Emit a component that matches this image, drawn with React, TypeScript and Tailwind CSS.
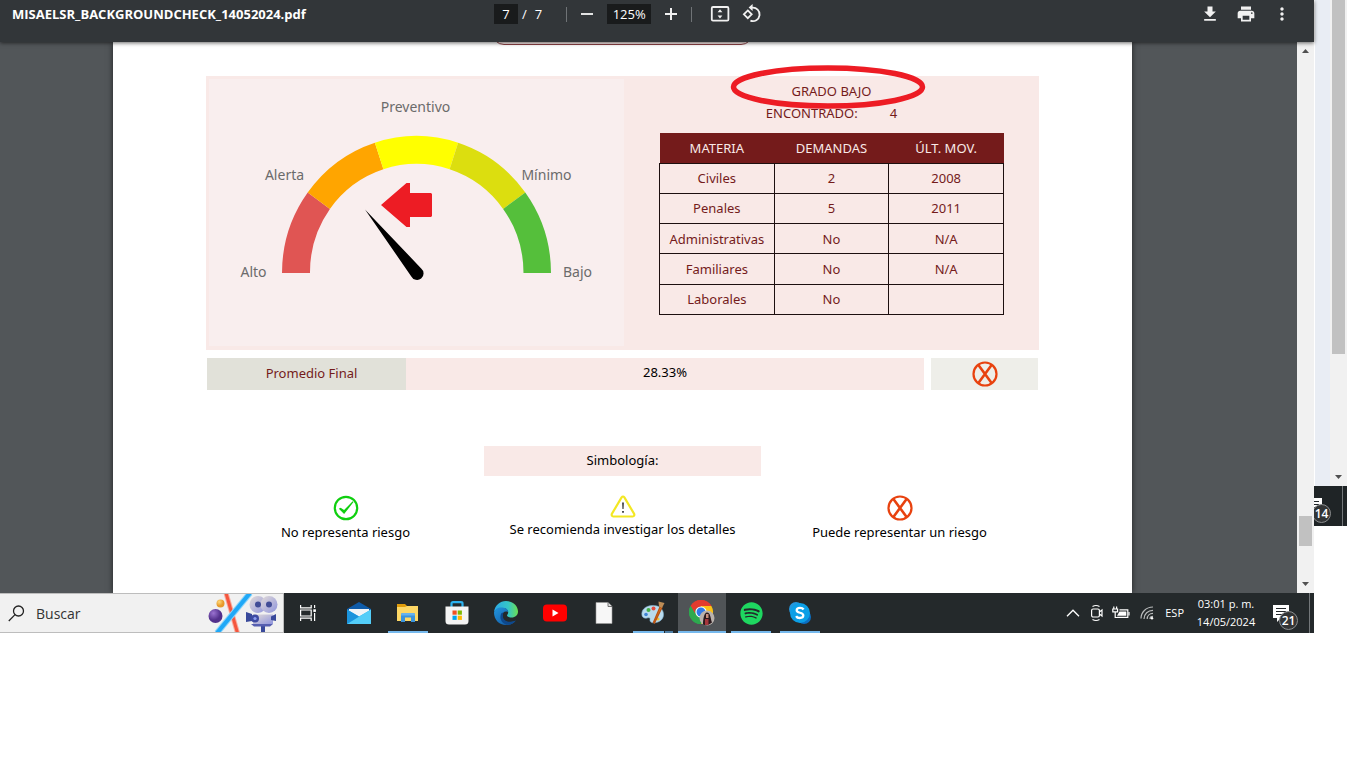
import React from "react";
import { FaSpotify } from "react-icons/fa";
import { MdFileDownload, MdPrint, MdMoreVert } from "react-icons/md";

const rows = [
  ["Civiles", "2", "2008"],
  ["Penales", "5", "2011"],
  ["Administrativas", "No", "N/A"],
  ["Familiares", "No", "N/A"],
  ["Laborales", "No", ""],
];

function Triangle({ up = false }: { up?: boolean }) {
  return (
    <svg viewBox="0 0 7 4" className="h-1 w-[7px]" aria-hidden="true">
      <path d={up ? "M0 4h7L3.500 0z" : "M0 0h7L3.500 4z"} fill="#505050" />
    </svg>
  );
}

function Toolbar() {
  return (
    <header className="relative z-10 flex h-[42px] items-start bg-[#323639] pt-1 font-['Open_Sans',sans-serif] text-white shadow-[0_1px_4px_rgba(0,0,0,0.6)]">
      <div className="flex h-5 w-[494px] shrink-0 items-center pl-3">
        <h1 className="text-[13px] leading-5 font-bold whitespace-nowrap">MISAELSR_BACKGROUNDCHECK_14052024.pdf</h1>
      </div>
      <div className="flex h-5 items-center text-[13px] leading-5">
        <input aria-label="Página" defaultValue="7" className="h-5 w-6 bg-[#191b1c] text-center" />
        <span className="ml-1">/</span>
        <span className="ml-2">7</span>
        <span className="ml-6 h-[15px] w-px bg-[#6f7376]" />
        <button aria-label="Alejar" className="ml-[10px] flex size-5 items-center justify-center">
          <span className="h-0.5 w-3 bg-[#e2e3e3]" />
        </button>
        <input aria-label="Zoom" defaultValue="125%" className="ml-[10px] h-5 w-11 bg-[#191b1c] text-center" />
        <button aria-label="Acercar" className="ml-[10px] flex size-5 items-center justify-center">
          <svg viewBox="0 0 12 12" className="size-3" fill="#f1f1f1"><path d="M5 0h2v5h5v2H7v5H5V7H0V5h5z" /></svg>
        </button>
        <span className="ml-[10px] h-[15px] w-px bg-[#6f7376]" />
        <button aria-label="Ajustar a la página" className="ml-[18px] flex size-5 items-center justify-center">
          <svg viewBox="0 0 20 18" className="h-[18px] w-5">
            <rect x="1.800" y="2" width="16.600" height="13.600" rx="1.200" fill="none" stroke="#f1f1f1" strokeWidth="1.800" />
            <path d="M10 4.200l2.400 3H7.600zM10 13.400l-2.400-3h4.800z" fill="#f1f1f1" />
          </svg>
        </button>
        <button aria-label="Girar" className="ml-3 flex size-5 items-center justify-center">
          <svg viewBox="0 0 20 20" className="size-5" fill="none" stroke="#f1f1f1" strokeWidth="1.800">
            <path d="M5.800 6.400l3.900 3.900-3.900 3.900-3.900-3.900z" />
            <path d="M10 3.600a6.800 6.800 0 1 1-1.600 13.100" />
            <path d="M10.600 0v7L6.600 3.600z" fill="#f1f1f1" stroke="none" />
          </svg>
        </button>
      </div>
      <div className="ml-auto flex h-5 items-center gap-4 pr-[22px] text-[#f1f1f1]">
        <button aria-label="Descargar"><MdFileDownload className="size-5" /></button>
        <button aria-label="Imprimir"><MdPrint className="size-5" /></button>
        <button aria-label="Más acciones"><MdMoreVert className="size-5" /></button>
      </div>
    </header>
  );
}

function Gauge() {
  return (
    <svg viewBox="0 0 414 267" className="block h-[267px] w-full bg-[#f9eeee] font-['Noto_Sans',sans-serif] text-[14px]" role="img" aria-label="Medidor de riesgo">
      <path d="M72.500 194A134.500 137 0 0 1 98.200 113.500L120.400 129.900A107 109 0 0 0 100.500 194Z" fill="#e05553" />
      <path d="M98.200 113.500A134.500 137 0 0 1 165.400 63.700L173.900 90.300A107 109 0 0 0 120.400 129.900Z" fill="#ffa500" />
      <path d="M165.400 63.700A134.500 137 0 0 1 248.600 63.700L240.100 90.300A107 109 0 0 0 173.900 90.300Z" fill="#ffff00" />
      <path d="M248.600 63.700A134.500 137 0 0 1 315.800 113.500L293.600 129.900A107 109 0 0 0 240.100 90.300Z" fill="#dcde0f" />
      <path d="M315.800 113.500A134.500 137 0 0 1 341.500 194H314A107 109 0 0 0 293.600 129.900Z" fill="#55bf3b" />
      <path d="M155.500 130.500L211.700 189.400A6.500 6.500 0 1 1 201.800 197.400Z" fill="#000" />
      <path d="M171.500 126L197 104h3.500v10H221.500l1 1v22l-1 1H200.500v10H197Z" fill="#ed1c24" />
      <g fill="#6b6b6b" textAnchor="middle">
        <text x="206" y="33">Preventivo</text>
        <text x="75" y="101">Alerta</text>
        <text x="337" y="101">Mínimo</text>
        <text x="44" y="198">Alto</text>
        <text x="368" y="198">Bajo</text>
      </g>
    </svg>
  );
}

function RiskIcon() {
  return (
    <svg viewBox="0 0 26 26" className="size-[26px]" fill="none" stroke="#e8420f" aria-hidden="true">
      <circle cx="13" cy="13" r="11.500" strokeWidth="2.200" />
      <path d="M6.400 4L19.600 22M19.600 4L6.400 22" strokeWidth="2.600" />
    </svg>
  );
}

function OkIcon() {
  return (
    <svg viewBox="0 0 26 26" className="size-[26px]" fill="none" aria-hidden="true">
      <circle cx="13" cy="13" r="11.200" stroke="#0fcf0f" strokeWidth="2.200" />
      <path d="M5.800 13.800l1.800-1 3.500 2.200 8.600-8.700.8.800-9.400 12z" fill="#0fcf0f" />
    </svg>
  );
}

function WarnIcon() {
  return (
    <svg viewBox="0 0 26 23" className="h-[23px] w-[26px]" aria-hidden="true">
      <path d="M11.600 2.400Q13 .600 14.400 2.400L24.200 19Q24.800 21.200 22.600 21.500H3.400Q1.200 21.200 1.800 19Z" fill="#fff" stroke="#f3e723" strokeWidth="2.200" />
      <path d="M12.200 7.500h1.600l-.3 6.500h-1zM12.200 16h1.600v1.700h-1.600z" fill="#222" />
    </svg>
  );
}

function Report() {
  return (
    <article className="ml-[113px] flex-1 bg-white px-[93px] pb-[51px] font-['Noto_Sans',sans-serif] text-[13px] leading-5 text-black shadow-[0_0_6px_rgba(0,0,0,0.6)]">
      <div className="flex h-[3px] items-end justify-center overflow-hidden">
        <div className="h-8 w-[261px] shrink-0 rounded-xl border border-[#8a3f42] bg-[#f9e9e7]" />
      </div>
      <section className="mt-[31px] flex bg-[#f9e9e7]">
        <div className="flex-1 pt-[3px] pb-1 pl-[3px]"><Gauge /></div>
        <div className="flex flex-1 flex-col items-center pt-[5px] text-[#741b1b]">
          <div className="relative">
            <h2>GRADO BAJO</h2>
            <svg viewBox="0 0 196 46" className="absolute -top-4 left-1/2 h-[46px] w-[196px] -translate-x-[102px]" fill="none" aria-hidden="true">
              <ellipse cx="98" cy="22" rx="94.500" ry="19" stroke="#ed1c24" strokeWidth="5.500" />
            </svg>
          </div>
          <p className="mt-0.5 flex gap-8"><span>ENCONTRADO:</span><span>4</span></p>
          <table className="mt-[10px] h-[182px] w-[345px] table-fixed border-collapse text-center">
            <thead>
              <tr className="h-[30px] bg-[#741b1b] text-[#f9e9e7]">
                {["MATERIA", "DEMANDAS", "ÚLT. MOV."].map((h) => (
                  <th key={h} scope="col" className="p-0 font-normal">{h}</th>
                ))}
              </tr>
            </thead>
            <tbody>
              {rows.map((r) => (
                <tr key={r[0]} className="h-[30px]">
                  {r.map((c, i) => (
                    <td key={i} className="border border-[#1d0f0f] p-0">{c}</td>
                  ))}
                </tr>
              ))}
            </tbody>
          </table>
        </div>
      </section>
      <section className="mx-px mt-2 flex h-8">
        <div className="flex w-[199px] items-center justify-center bg-[#e1e1d9] pb-0.5 pl-[10px] text-[#741b1b]">Promedio Final</div>
        <div className="flex flex-1 items-center justify-center bg-[#f9e9e7] pb-1">28.33%</div>
        <div className="ml-[7px] flex w-[107px] items-center justify-center bg-[#eeeee9]"><RiskIcon /></div>
      </section>
      <section className="mx-px mt-14">
        <h2 className="mx-auto w-1/3 bg-[#f9e9e7] pt-1 pb-1.5 text-center">Simbología:</h2>
        <ul className="mt-[19px] grid grid-cols-3">
          <li className="flex flex-col items-center gap-[1px]"><OkIcon />No representa riesgo</li>
          <li className="flex flex-col items-center gap-[1px]"><WarnIcon />Se recomienda investigar los detalles</li>
          <li className="flex flex-col items-center gap-[1px]"><RiskIcon />Puede representar un riesgo</li>
        </ul>
      </section>
    </article>
  );
}

function SearchArt() {
  return (
    <svg viewBox="0 0 76 40" className="h-10 w-[76px] shrink-0" aria-hidden="true">
      <defs>
        <radialGradient id="ball" cx=".35" cy=".3"><stop stopColor="#9a72d0" /><stop offset="1" stopColor="#53308c" /></radialGradient>
        <radialGradient id="sun" cx=".35" cy=".3"><stop stopColor="#ffd97a" /><stop offset="1" stopColor="#e79a2b" /></radialGradient>
        <linearGradient id="cam" x1="0" y1="0" x2="1" y2="1"><stop stopColor="#e3dcd8" /><stop offset="1" stopColor="#8f94dc" /></linearGradient>
      </defs>
      <circle cx="8.500" cy="23" r="7" fill="url(#ball)" />
      <circle cx="13.500" cy="10.500" r="4" fill="url(#sun)" />
      <path d="M19 0L30.500 40" stroke="#f9a99b" strokeWidth="5" />
      <path d="M19 0L30.500 40" stroke="#f4563d" strokeWidth="3" />
      <path d="M43 0L10 40" stroke="#8bd5fb" strokeWidth="6" />
      <path d="M43 0L10 40" stroke="#1fa8f7" strokeWidth="4" />
      <path d="M54 30h4v10h-4z" fill="#39499b" />
      <path d="M44 31h22l-3 2.500H47z" fill="#565fb0" />
      <circle cx="51" cy="11.500" r="8.500" fill="url(#cam)" />
      <circle cx="62" cy="11.500" r="8.500" fill="url(#cam)" />
      <circle cx="51" cy="11.500" r="3" fill="#414c96" />
      <circle cx="62" cy="11.500" r="3" fill="#414c96" />
      <path d="M46 21.500h20v9.500H46z" fill="url(#cam)" />
      <path d="M39 19l6 2v7l-6 1zM69 21l-5 2.500v3.500l5 1z" fill="#39499b" />
      <circle cx="48" cy="25.500" r="4" fill="#3e4aa2" />
      <circle cx="48" cy="25.500" r="1.600" fill="#8b9cf0" />
    </svg>
  );
}

const apps: { name: string; state: string; icon: React.ReactNode }[] = [
  {
    name: "Correo", state: "idle",
    icon: (
      <svg viewBox="0 0 24 24" className="size-6">
        <path d="M0 8L12 1l12 7v5H0z" fill="#0f5ba8" />
        <path d="M2 8h20v8H2z" fill="#f1f4f7" />
        <path d="M0 8.500l12 7 12-7V23H0z" fill="#2fb4ee" />
        <path d="M0 23L24 8.500V23z" fill="#53cdf8" />
        <path d="M0 23l12-7.500L0 8.500z" fill="#1b93dc" />
      </svg>
    ),
  },
  {
    name: "Explorador de archivos", state: "open",
    icon: (
      <svg viewBox="0 0 24 24" className="size-6">
        <path d="M1 3h8l2 2h11v4H1z" fill="#e09c0b" />
        <path d="M1 6h8l2-1h11v15H1z" fill="#fdd765" />
        <path d="M5 20v-6.500q0-1.500 1.500-1.500h11q1.500 0 1.500 1.500V21h-4v-4.500H9V21H5z" fill="#3b93dc" />
        <path d="M5 13.500Q5 12 6.500 12h11q1.500 0 1.500 1.500v1H5z" fill="#66b2ee" />
      </svg>
    ),
  },
  {
    name: "Microsoft Store", state: "idle",
    icon: (
      <svg viewBox="0 0 24 24" className="size-6">
        <path d="M6.500 6V2.500Q6.500 1.200 8 1.200h8q1.500 0 1.500 1.300V6" fill="none" stroke="#2cb2ef" strokeWidth="2.200" />
        <path d="M.5 5.500h23V20q0 3.500-3.500 3.500H4Q.5 23.500.5 20z" fill="#f4f4f4" />
        <path d="M7.500 9.500h4.200v4.200H7.500z" fill="#f25022" /><path d="M12.700 9.500h4.200v4.200h-4.200z" fill="#7fba00" />
        <path d="M7.500 14.700h4.200v4.200H7.500z" fill="#00a4ef" /><path d="M12.700 14.700h4.200v4.200h-4.200z" fill="#ffb900" />
      </svg>
    ),
  },
  {
    name: "Microsoft Edge", state: "idle",
    icon: (
      <svg viewBox="0 0 24 24" className="size-6">
        <defs>
          <linearGradient id="edgeTop"><stop stopColor="#2aa8e8" /><stop offset=".6" stopColor="#36c6c6" /><stop offset="1" stopColor="#6be052" /></linearGradient>
          <linearGradient id="edgeLow" x1="0" y1="0" x2="1" y2="1"><stop stopColor="#2295de" /><stop offset="1" stopColor="#10529c" /></linearGradient>
        </defs>
        <path d="M0 11C1 4 6 0 12 0c7 0 12 4.700 12 10.500 0 3.500-2.600 6-6.500 6-3 0-4.500-1.200-4.500-2 0-.8 1.200-1.300 1.200-3.200C14.200 8.500 11.500 7 8.500 7 4.500 7 1.500 8.500 0 11z" fill="url(#edgeTop)" />
        <path d="M0 11.500C.8 8 4.500 6 8.500 6.500c3.500.3 5.700 2.300 5.700 4.500-4-1.500-6.200 1-5.800 4.500.5 4.500 5 7.500 13.200 4.200C19.500 22.500 16 24 12 24 5 24 0 18.500 0 11.500z" fill="url(#edgeLow)" />
        <path d="M7.500 12c-3 5 .500 11.500 6.500 11.800 3.500-.3 6-2 7.800-4.400-5.800 2.600-12 1.600-12.900-3.600-.2-1.700 0-2.800.6-4.300z" fill="#0e488c" />
      </svg>
    ),
  },
  {
    name: "YouTube", state: "idle",
    icon: (
      <svg viewBox="0 0 24 24" className="size-6">
        <rect y="3.500" width="24" height="17" rx="4" fill="#f00" />
        <path d="M9.500 8.500l6 3.500-6 3.500z" fill="#fff" />
      </svg>
    ),
  },
  {
    name: "Documento", state: "idle",
    icon: (
      <svg viewBox="0 0 24 24" className="size-6">
        <path d="M4 1.500h12l4 4v17H4z" fill="#f7f7f7" stroke="#9c9c9c" strokeWidth=".6" />
        <path d="M16 1.500v4h4" fill="#ddd" stroke="#555" strokeWidth=".8" />
      </svg>
    ),
  },
  {
    name: "Paint", state: "multi",
    icon: (
      <svg viewBox="0 0 24 24" className="size-6">
        <path d="M11 4.500C4 5 0 9 1 14.500c.5 2.500 3 3 5 2.500 2-.7 3.500 0 3 1.500-.5 2 1 3.500 4 3.300 6-.3 9.700-4 9.500-8.600C22.300 7.500 17.500 4 11 4.500z" fill="#b9dbee" stroke="#7eb1d0" strokeWidth=".6" />
        <circle cx="5" cy="13.500" r="1.800" fill="#3f84d4" /><circle cx="7.500" cy="9" r="2" fill="#45af49" />
        <circle cx="12.500" cy="7.500" r="2" fill="#e34b3e" /><circle cx="17" cy="18" r="1.500" fill="#f5c33b" />
        <path d="M19 6l1.800.8L13.500 22l-1-.7z" fill="#e87b24" stroke="#b85414" strokeWidth="1.300" />
        <path d="M17.500.500l6 1.500-2.500 5-3-1.500z" fill="#bd8d57" />
      </svg>
    ),
  },
  {
    name: "Google Chrome", state: "active",
    icon: (
      <svg viewBox="0 0 26 26" className="size-[26px]">
        <path d="M12 12L1.600 6A12 12 0 0 1 22.400 6z" fill="#e33b2e" />
        <path d="M12 12V6h10.400A12 12 0 0 1 12 24z" fill="#fbc116" />
        <path d="M12 12l5 3-5 9A12 12 0 0 1 1.600 6z" fill="#2da94f" />
        <path d="M1.600 6A12 12 0 0 1 22.400 6H12a6 6 0 0 0-5.200 9z" fill="#e33b2e" />
        <path d="M1.600 6L6.800 15 12 18v6A12 12 0 0 1 1.600 6z" fill="#2da94f" />
        <circle cx="12" cy="12" r="5.600" fill="#fff" /><circle cx="12" cy="12" r="4.500" fill="#2f79e8" />
        <circle cx="18" cy="18" r="7.500" fill="#b9b2ad" />
        <path d="M14 24.500c0-5 1-12 4-12 3.500 0 3.500 6 5 10q-4.500 4-9 2z" fill="#2b1a1d" />
        <path d="M17 14h2.500v4H17z" fill="#c98f7c" /><path d="M16 19h3.500v6H16z" fill="#a5373c" />
      </svg>
    ),
  },
  { name: "Spotify", state: "open", icon: <FaSpotify className="size-[23px] text-[#1ed760]" /> },
  {
    name: "Skype", state: "open",
    icon: (
      <svg viewBox="0 0 24 24" className="size-6">
        <circle cx="8" cy="8" r="7" fill="#2596dc" /><circle cx="16" cy="16" r="7" fill="#0c6fc2" />
        <circle cx="12" cy="12" r="10" fill="#0c9fe6" />
        <path d="M15.600 8.500C14.800 7.300 13.500 6.900 12 6.900c-2 0-3.300.9-3.300 2.400 0 3.300 6.600 1.600 6.600 5 0 1.700-1.500 2.700-3.500 2.700-1.600 0-3-.6-3.700-1.900" fill="none" stroke="#fff" strokeWidth="2.300" />
      </svg>
    ),
  },
];

function NotificationIcon({ count }: { count: string }) {
  return (
    <span className="relative mt-1.5 block size-6">
      <svg viewBox="0 0 24 24" className="size-6" aria-hidden="true">
        <path d="M0 1h16v13h-8l-4 4v-4H0z" fill="#fff" />
        <path d="M3 4.500h10M3 7.500h10M3 10.500h6" stroke="#22272a" strokeWidth="1" />
      </svg>
      <span className="absolute top-[7px] left-1.5 flex size-[19px] items-center justify-center rounded-full border border-[#8b8d8e] bg-[#333536] text-[12px] leading-4 font-semibold text-white">{count}</span>
    </span>
  );
}

function Taskbar() {
  return (
    <footer className="flex h-10 bg-[#24292b] font-['Open_Sans',sans-serif] text-white">
      <label className="flex w-[284px] shrink-0 items-center overflow-hidden border-y border-r border-[#bdbdbd] bg-[#f1f1f1] pl-2">
        <svg viewBox="0 0 17 17" className="size-[17px] shrink-0" fill="none" stroke="#222" strokeWidth="1.300" aria-hidden="true">
          <circle cx="10.500" cy="6" r="5" /><path d="M7 9.600L.8 16" />
        </svg>
        <input aria-label="Buscar" placeholder="Buscar" className="ml-[11px] min-w-0 flex-1 pt-0.5 text-[14px] leading-5 text-[#333] placeholder:text-[#333]" />
        <SearchArt />
      </label>
      <button aria-label="Vista de tareas" className="flex w-12 items-center justify-center">
        <svg viewBox="0 0 18 16" className="h-4 w-[18px]" fill="none" stroke="#fff" strokeWidth="1.200">
          <path d="M1.600 0v2.800h10.600V0M1.600 16v-2.800h10.600V16M1.600 5h10.600v6H1.600zM15.600 0v3M15.600 8v8" />
          <path d="M14.300 4.300h2.600v2.600h-2.600z" fill="#fff" stroke="none" />
        </svg>
      </button>
      <nav aria-label="Aplicaciones" className="ml-[3px] flex gap-px">
        {apps.map((a) => (
          <button key={a.name} aria-label={a.name} className={a.state === "active" ? "flex w-12 flex-col items-center bg-[#505457]" : "flex w-12 flex-col items-center"}>
            <span className="flex h-[38px] items-center pt-0.5">{a.icon}</span>
            {a.state === "open" && <span className="h-0.5 w-10 bg-[#76b9ed]" />}
            {a.state === "active" && <span className="h-0.5 w-12 bg-[#76b9ed]" />}
            {a.state === "multi" && <span className="flex h-0.5 w-10 gap-px"><span className="flex-1 bg-[#76b9ed]" /><span className="w-2 bg-[#4f7fa5]" /></span>}
          </button>
        ))}
      </nav>
      <div className="ml-auto flex items-center">
        <button aria-label="Mostrar iconos ocultos">
          <svg viewBox="0 0 14 8" className="h-2 w-[14px]" fill="none" stroke="#fff" strokeWidth="1.300"><path d="M1 7.200l6-6 6 6" /></svg>
        </button>
        <svg viewBox="0 0 14 18" className="ml-[10px] h-[18px] w-[14px]" fill="none" stroke="#fff" strokeWidth="1.200" aria-hidden="true">
          <rect x="1.600" y="5" width="7.800" height="8" rx="1.500" /><path d="M9.400 8l2.600-2v6l-2.600-2M2.500 2.500Q6 .500 9.500 2.500M2.500 15.500Q6 17.500 9.500 15.500" />
        </svg>
        <svg viewBox="0 0 18 14" className="ml-2 h-[14px] w-[18px]" fill="none" stroke="#fff" strokeWidth="1.200" aria-hidden="true">
          <path d="M1.800.500v2.500M4.600.500v2.500M.8 3h4.800v2.800H.8zM3.200 5.800v5.700H7M7.500 3.800h8.300v7.600H5" /><path d="M7.500 5.500h6.800v4.300H5z" fill="#fff" stroke="none" /><path d="M17 6v3.500" />
        </svg>
        <svg viewBox="0 0 14 14" className="ml-[10px] h-[14px] w-[14px]" fill="none" stroke="#fff" strokeWidth="1.200" aria-hidden="true">
          <path d="M1 12.500C1 6.500 6 1 13 1M4 13C4 8 8 4.300 13 4.300M7.200 13c0-3.500 2.600-5.600 5.800-5.600M10 13c0-1.700 1.300-2.700 3-2.700" stroke="#b9bbbc" /><circle cx="12" cy="12.300" r="1.200" fill="#fff" stroke="none" />
        </svg>
        <span className="ml-[11px] text-[11px] leading-4">ESP</span>
        <time dateTime="2024-05-14T15:01" className="ml-3 w-[60px] text-center text-[11px] leading-[18px] whitespace-nowrap">03:01 p. m.<br />14/05/2024</time>
        <button aria-label="Notificaciones" className="ml-[17px]"><NotificationIcon count="21" /></button>
        <span className="mr-1 ml-3 h-10 w-px bg-[#73777a]" />
      </div>
    </footer>
  );
}

function BackWindow() {
  return (
    <aside className="mr-[19px] flex w-[33px] shrink-0 flex-col pl-px">
      <div className="flex h-[486px]">
        <div className="flex-1 bg-[#e9edf4]" />
        <div className="flex w-[17px] flex-col items-center justify-between bg-[#f1f1f1] pb-[7px]">
          <div className="h-[354px] w-[13px] bg-[#c1c1c1]" />
          <Triangle />
        </div>
      </div>
      <div className="-ml-px flex h-10 items-center overflow-hidden bg-[#1f2426] font-['Open_Sans',sans-serif]">
        <div className="-ml-2"><NotificationIcon count="14" /></div>
        <span className="mr-1 ml-auto h-10 w-px bg-[#73777a]" />
      </div>
    </aside>
  );
}

export default function App() {
  return (
    <div className="flex min-h-screen items-start bg-white">
      <div className="min-w-0 flex-1">
        <Toolbar />
        <main className="flex overflow-hidden bg-[#525659]">
          <Report />
          <div className="ml-[165px] flex w-[17px] shrink-0 flex-col items-center bg-[#f1f1f1] pt-[7px] pb-[7px]">
            <Triangle up />
            <div className="mt-auto mb-9 h-[30px] w-[13px] bg-[#c1c1c1]" />
            <Triangle />
          </div>
        </main>
        <Taskbar />
      </div>
      <BackWindow />
    </div>
  );
}
